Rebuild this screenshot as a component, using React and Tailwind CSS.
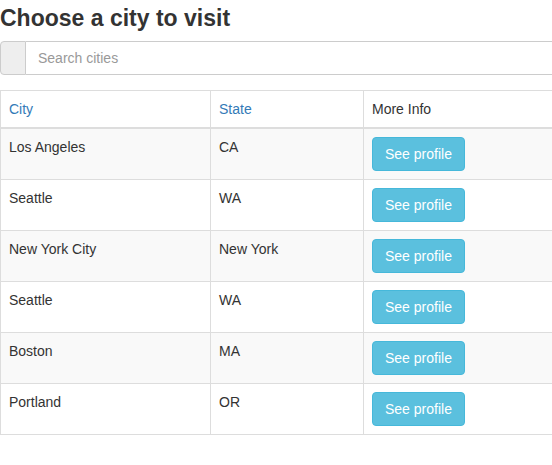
const cities = [
  { name: "Los Angeles", state: "CA" },
  { name: "Seattle", state: "WA" },
  { name: "New York City", state: "New York" },
  { name: "Seattle", state: "WA" },
  { name: "Boston", state: "MA" },
  { name: "Portland", state: "OR" },
];

export default function App() {
  return (
    <div className="w-[552px] h-[465px] overflow-hidden bg-white font-['Liberation_Sans',Arial,sans-serif] text-[14px] leading-[20px] text-[#333]">
      <div className="w-[640px]">
        <h3 className="mt-[5px] mb-[10px] text-[23px] leading-[26px] font-bold text-[#333]">Choose a city to visit</h3>

        <div className="flex h-[34px]">
          <span className="w-[26px] shrink-0 rounded-l-[4px] border border-[#ccc] bg-[#eee]" />
          <input
            type="text"
            placeholder="Search cities"
            className="h-[34px] flex-1 border border-l-0 border-[#ccc] px-3 text-[14px] text-[#555] outline-none placeholder:text-[#999]"
          />
        </div>

        <table className="mt-[15px] w-full border-collapse border border-[#ddd]">
          <thead>
            <tr>
              <th className="w-[210px] border border-b-2 border-[#ddd] p-2 text-left font-normal text-[#337ab7]">City</th>
              <th className="w-[153px] border border-b-2 border-[#ddd] p-2 text-left font-normal text-[#337ab7]">State</th>
              <th className="border border-b-2 border-[#ddd] p-2 text-left font-normal">More Info</th>
            </tr>
          </thead>
          <tbody>
            {cities.map((city, i) => (
              <tr key={i} className={i % 2 === 0 ? "bg-[#f9f9f9]" : "bg-white"}>
                <td className="border border-[#ddd] p-2 align-top">{city.name}</td>
                <td className="border border-[#ddd] p-2 align-top">{city.state}</td>
                <td className="border border-[#ddd] p-2 align-top">
                  <button
                    type="button"
                    className="h-[34px] rounded-[4px] border border-[#46b8da] bg-[#5bc0de] px-3 text-[14px] text-white"
                  >
                    See profile
                  </button>
                </td>
              </tr>
            ))}
          </tbody>
        </table>
      </div>
    </div>
  );
}
